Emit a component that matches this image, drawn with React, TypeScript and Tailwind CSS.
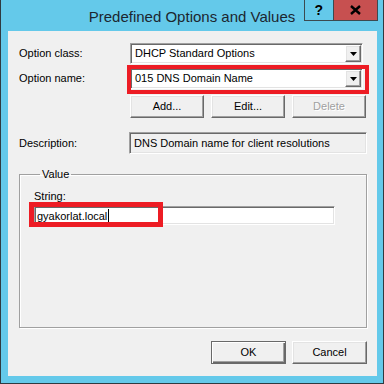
import React from 'react';

const font = { fontFamily: '"Liberation Sans", Arial, sans-serif' };

const sunken =
  'border border-t-[#a0a0a0] border-l-[#a0a0a0] border-b-white border-r-white shadow-[inset_1px_1px_0_#696969,inset_-1px_-1px_0_#e3e3e3]';
const raised =
  'border border-t-white border-l-white border-b-[#696969] border-r-[#696969] shadow-[inset_-1px_-1px_0_#a0a0a0,inset_1px_1px_0_#e3e3e3] bg-[#f0f0f0]';

function Combo({ value }: { value: string }) {
  return (
    <div className={`flex h-[21px] w-[233px] items-stretch bg-white p-[1px] ${sunken}`}>
      <span className="flex-1 pl-[3px] text-[11px] leading-[17px] text-black">{value}</span>
      <span className={`flex w-[16px] items-center justify-center ${raised}`}>
        <svg width="7" height="4" viewBox="0 0 7 4">
          <path d="M0 0H7L3.5 4Z" fill="#000" />
        </svg>
      </span>
    </div>
  );
}

function Button({
  label,
  disabled,
  primary,
  width = 'w-[74px]',
}: {
  label: string;
  disabled?: boolean;
  primary?: boolean;
  width?: string;
}) {
  const base = primary
    ? 'border border-[#696969] bg-[#f0f0f0] shadow-[inset_1px_1px_0_#fff,inset_-1px_-1px_0_#696969,inset_-2px_-2px_0_#a0a0a0]'
    : raised;
  return (
    <div
      className={`flex h-[23px] ${width} items-center justify-center text-[11px] ${base} ${
        disabled ? 'text-[#a0a0a0] [text-shadow:1px_1px_0_#fff]' : 'text-black'
      }`}
    >
      {label}
    </div>
  );
}

export default function App() {
  return (
    <div
      className="flex h-[384px] w-[384px] flex-col border-b border-l border-r border-[#2f3a40] bg-[#64c9ea]"
      style={font}
    >
      {/* Title bar */}
      <div className="flex h-[31px] shrink-0">
        <div className="w-[79px]" />
        <div className="flex-1 pt-[9px] text-center text-[15px] leading-[15px] text-[#1c2630]">
          Predefined Options and Values
        </div>
        <div className="flex w-[79px] items-start justify-end pr-[5px]">
          <div className="flex h-[21px] w-[29px] items-center justify-center border border-r-0 border-t-0 border-[#3c4a50] text-[14px] font-bold text-black">
            ?
          </div>
          <div className="flex h-[21px] w-[46px] items-center justify-center border border-t-0 border-[#3c4a50] bg-[#c75050]">
            <svg width="11" height="10" viewBox="0 0 11 10">
              <path d="M1 1L10 9M10 1L1 9" stroke="#000" strokeWidth="2.4" />
            </svg>
          </div>
        </div>
      </div>

      {/* Client area */}
      <div className="relative mb-[7px] ml-[7px] mr-[6px] flex flex-1 flex-col bg-[#f0f0f0] pl-[11px] text-[11px] text-black">
        <div className="mt-[12px] flex h-[21px] items-center">
          <span className="w-[111px]">Option class:</span>
          <Combo value="DHCP Standard Options" />
        </div>
        <div className="mt-[4px] flex h-[21px] items-center">
          <span className="w-[111px]">Option name:</span>
          <Combo value="015 DNS Domain Name" />
        </div>
        <div className="ml-[111px] mt-[6px] flex gap-[7px]">
          <Button label="Add..." />
          <Button label="Edit..." />
          <Button label="Delete" disabled />
        </div>
        <div className="mt-[14px] flex h-[22px] items-center">
          <span className="w-[110px]">Description:</span>
          <div className={`h-[22px] w-[238px] bg-[#f0f0f0] pl-[4px] pt-[3px] leading-[14px] ${sunken}`}>
            DNS Domain name for client resolutions
          </div>
        </div>

        <fieldset className="mt-[13px] h-[161px] w-[348px] border border-[#a0a0a0] shadow-[inset_1px_1px_0_#fff,1px_1px_0_#fff] pl-[14px]">
          <legend className="ml-[6px] px-[2px] leading-[14px]">Value</legend>
          <div className="mt-[8px] leading-[14px]">String:</div>
          <div className={`mt-[3px] flex h-[19px] w-[301px] items-center bg-white pl-[2px] ${sunken}`}>
            <span className="leading-[14px]">gyakorlat.local</span>
            <span className="ml-[1px] h-[13px] w-[1px] bg-black" />
          </div>
        </fieldset>

        <div className="mt-[13px] flex justify-end gap-[6px] pr-[10px]">
          <Button label="OK" primary width="w-[75px]" />
          <Button label="Cancel" width="w-[75px]" />
        </div>

        {/* Red highlight marks */}
        <div className="pointer-events-none absolute left-[119px] top-[34px] h-[29px] w-[242px] border-[4px] border-[#ed1c24]" />
        <div className="pointer-events-none absolute left-[21px] top-[171px] h-[25px] w-[134px] border-[5px] border-[#ed1c24]" />
      </div>
    </div>
  );
}
